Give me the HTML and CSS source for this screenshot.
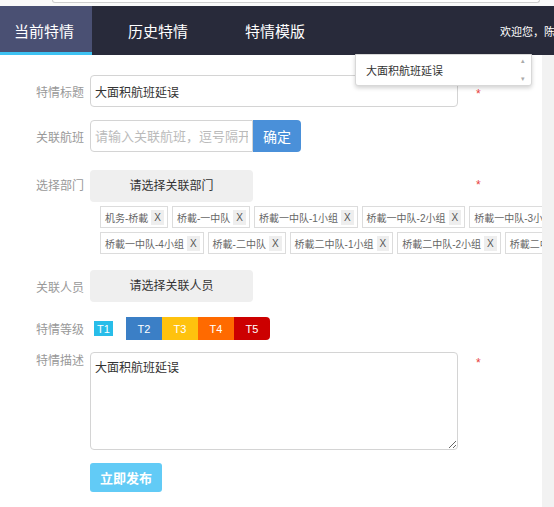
FILE: index.html
```html
<!DOCTYPE html>
<html lang="zh-CN">
<head>
    <meta charset="UTF-8">
    <title>特情发布</title>
    <link rel="stylesheet" href="styles.css">
</head>
<body>
    <div class="topbar"><div class="topbar-edge"></div></div>

    <div class="nav">
        <div class="tab active">当前特情</div>
        <div class="tab">历史特情</div>
        <div class="tab">特情模版</div>
        <div class="welcome">欢迎您，陈林</div>
    </div>

    <div class="main">
        <div class="row">
            <div class="label">特情标题</div>
            <input class="input wide" type="text" value="大面积航班延误">
            <span class="star star-mid">*</span>
        </div>

        <div class="row">
            <div class="label">关联航班</div>
            <input class="input short" type="text" placeholder="请输入关联航班，逗号隔开">
            <button class="btn-ok">确定</button>
        </div>

        <div class="row row-top row-dept">
            <div class="label label-mid">选择部门</div>
            <div class="picker">请选择关联部门</div>
            <span class="star star-dept">*</span>
        </div>
        <div class="tags">
            <span class="tag">机务-桥載<span class="x">X</span></span>
            <span class="tag">桥載-一中队<span class="x">X</span></span>
            <span class="tag">桥載一中队-1小组<span class="x">X</span></span>
            <span class="tag">桥載一中队-2小组<span class="x">X</span></span>
            <span class="tag">桥載一中队-3小组<span class="x">X</span></span>
            <span class="tag">桥載一中队-4小组<span class="x">X</span></span>
            <span class="tag">桥載-二中队<span class="x">X</span></span>
            <span class="tag">桥載二中队-1小组<span class="x">X</span></span>
            <span class="tag">桥載二中队-2小组<span class="x">X</span></span>
            <span class="tag">桥載二中队-3小组<span class="x">X</span></span>
        </div>

        <div class="row row-people">
            <div class="label">关联人员</div>
            <div class="picker">请选择关联人员</div>
        </div>

        <div class="row row-level">
            <div class="label">特情等级</div>
            <div class="levels">
                <span class="lv lv1">T1</span>
                <span class="lv lv2">T2</span>
                <span class="lv lv3">T3</span>
                <span class="lv lv4">T4</span>
                <span class="lv lv5">T5</span>
            </div>
        </div>

        <div class="row row-top">
            <div class="label label-desc">特情描述</div>
            <textarea class="desc">大面积航班延误</textarea>
            <span class="star star-desc">*</span>
        </div>

        <div class="submit-row">
            <button class="btn-submit">立即发布</button>
        </div>
    </div>

    <!-- 标题输入的下拉提示 -->
    <div class="suggest">
        <span class="suggest-item">大面积航班延误</span>
        <span class="suggest-bar">
            <span class="arr">&#9652;</span>
            <span class="arr">&#9662;</span>
        </span>
    </div>
</body>
</html>
```

FILE: styles.css
```css
html, body {
    overflow: hidden;
}
body {
    margin: 0;
    font-family: "Liberation Sans", "Noto Sans CJK SC", sans-serif;
    font-size: 12px;
    color: #333;
    background-color: #f2f2f2;
}

.topbar {
    height: 6px;
    background-color: #fafafa;
    overflow: hidden;
}
.topbar-edge {
    margin-left: 52px;
    width: 486px;
    height: 2px;
    border: 1px solid #cfcfcf;
    border-top: none;
    border-radius: 0 0 3px 3px;
    background-color: #fff;
}

/* 顶部导航 */
.nav {
    display: flex;
    height: 49px;
    background-color: #282a3a;
    color: #fff;
    white-space: nowrap;
    overflow: hidden;
}
.tab {
    display: flex;
    align-items: center;
    padding: 0 21px 0 36px;
    font-size: 15px;
}
.tab.active {
    width: 58px;
    padding: 0 20px 0 14px;
    background-color: #4a5073;
    border-bottom: 3px solid #3ec2f2;
    padding-top: 3px;
}
.welcome {
    display: flex;
    align-items: center;
    margin-left: 174px;
    font-size: 11px;
}

/* 表单区域 */
.main {
    width: 542px;
    padding: 20px 0 30px;
    background-color: #fff;
    overflow: hidden;
}
.row {
    display: flex;
    align-items: center;
    margin-bottom: 13px;
}
.row-top {
    align-items: flex-start;
    margin-bottom: 0;
}
.row-dept {
    margin-top: 18px;
}
.label {
    width: 48px;
    padding-left: 36px;
    margin-right: 6px;
    color: #999;
    font-size: 12px;
    flex-shrink: 0;
}
.label-mid {
    line-height: 16px;
    margin-top: 8px;
}
.label-desc {
    line-height: 16px;
    margin-top: 1px;
}

.input {
    box-sizing: border-box;
    height: 32px;
    border: 1px solid #d4d4d4;
    border-radius: 4px;
    padding: 0 4px;
    font-family: inherit;
    font-size: 12px;
    color: #333;
    outline: none;
}
.input.wide {
    width: 368px;
}
.input.short {
    width: 163px;
    border-radius: 4px 0 0 4px;
    font-size: 13px;
}
.input::placeholder {
    color: #bbb;
}
.btn-ok {
    width: 48px;
    height: 32px;
    border: none;
    border-radius: 0 4px 4px 0;
    background-color: #4a90d9;
    color: #fff;
    font-family: inherit;
    font-size: 14px;
}

.star {
    margin-left: 18px;
    color: #e8413c;
    font-size: 12px;
    line-height: 12px;
    align-self: flex-start;
}
.star-mid {
    margin-top: 13px;
}
.star-dept {
    margin-left: 223px;
    margin-top: 9px;
}
.star-desc {
    margin-top: 5px;
}

.picker {
    width: 163px;
    height: 32px;
    line-height: 32px;
    text-align: center;
    background-color: #efefef;
    border-radius: 4px;
    color: #333;
}

/* 已选部门 */
.tags {
    display: flex;
    flex-wrap: wrap;
    gap: 4px;
    width: 540px;
    margin: 4px 0 0 100px;
}
.tag {
    display: inline-flex;
    align-items: center;
    height: 20px;
    padding: 0 3px 0 4px;
    border: 1px solid #dcdcdc;
    background-color: #fff;
    color: #666;
    font-size: 10px;
    white-space: nowrap;
}
.x {
    margin-left: 3px;
    padding: 0 3px;
    line-height: 15px;
    background-color: #eee;
    color: #555;
    font-size: 10px;
}

.row-people {
    margin-top: 16px;
    margin-bottom: 15px;
}

.row-level {
    margin-bottom: 12px;
}
.levels {
    display: flex;
    align-items: center;
    margin-left: 4px;
}
.lv {
    display: flex;
    align-items: center;
    justify-content: center;
    width: 36px;
    height: 23px;
    color: #fff;
    font-size: 11px;
}
.lv1 {
    width: 19px;
    height: 15px;
    margin-right: 13px;
    background-color: #28bde9;
}
.lv2 { background-color: #3b7fc6; }
.lv3 { background-color: #ffc20e; }
.lv4 { background-color: #ff6a00; }
.lv5 {
    background-color: #cc0000;
    border-radius: 0 4px 4px 0;
}

.desc {
    box-sizing: border-box;
    width: 368px;
    height: 98px;
    padding: 5px 4px;
    border: 1px solid #d4d4d4;
    border-radius: 4px;
    font-family: inherit;
    font-size: 12px;
    color: #333;
    resize: vertical;
    outline: none;
}

.submit-row {
    padding: 13px 0 0 90px;
}
.btn-submit {
    width: 72px;
    height: 29px;
    border: none;
    border-radius: 3px;
    background-color: #62cbf6;
    color: #fff;
    font-family: inherit;
    font-size: 13px;
    font-weight: bold;
}

/* 下拉提示框 */
.suggest {
    position: absolute;
    left: 355px;
    top: 54px;
    width: 175px;
    height: 30px;
    display: flex;
    align-items: center;
    justify-content: space-between;
    background-color: #fff;
    border: 1px solid #d8d8d8;
    box-shadow: 0 2px 4px rgba(0,0,0,0.18);
    border-radius: 0 0 3px 3px;
}
.suggest-item {
    padding-left: 10px;
    font-size: 11px;
    color: #333;
}
.suggest-bar {
    display: flex;
    flex-direction: column;
    justify-content: space-between;
    height: 28px;
    width: 12px;
    margin-right: 2px;
    color: #aaa;
    font-size: 7px;
    line-height: 10px;
    text-align: center;
}
```
